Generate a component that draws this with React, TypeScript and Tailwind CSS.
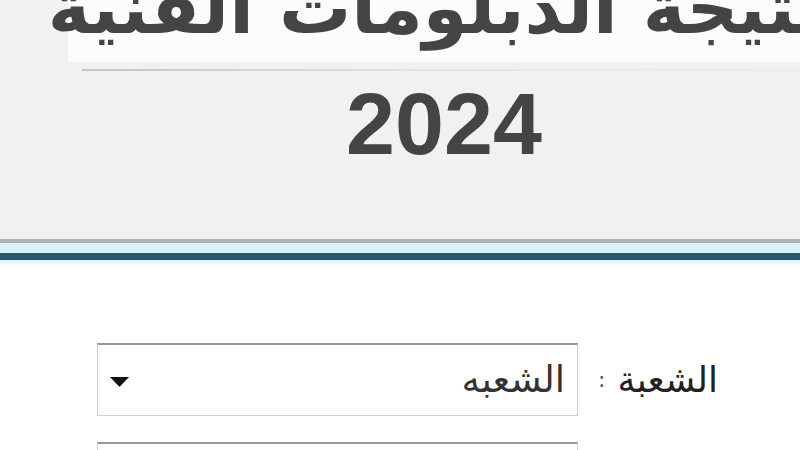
import { useState } from "react";

const SECTIONS = ["الشعبه", "صناعي", "تجاري", "زراعي", "فندقي"];

export default function App() {
  const [section, setSection] = useState(SECTIONS[0]);

  return (
    <div className="w-[800px] h-[450px] overflow-hidden bg-white" style={{ fontFamily: '"DejaVu Sans", sans-serif' }}>
      {/* banner */}
      <div className="h-[239px] bg-[#f1f1f1] flex flex-col">
        <div className="h-[62px] overflow-hidden flex justify-center pl-[72px] bg-[linear-gradient(to_right,#f1f1f1_68px,#fcfcfc_68px)]">
          <h1 dir="rtl" className="mt-[-28px] whitespace-nowrap text-[72px] leading-none font-bold text-[#444]">
            نتيجة الدبلومات الفنية
          </h1>
        </div>
        <div className="mt-[7px] ml-[82px] h-[2px] bg-gradient-to-r from-[#c4c4c4] via-[#e4e4e4] to-[#eeeeee]" />
        <div className="flex justify-center pl-[88px] mt-[9px]">
          <span
            className="text-[88px] leading-none font-bold text-[#444]"
            style={{ fontFamily: '"Liberation Sans", Arial, sans-serif' }}
          >
            2024
          </span>
        </div>
      </div>

      {/* separator stripes */}
      <div className="h-[4px] bg-[#a9b3b8]" />
      <div className="h-[10px] bg-[#d9f2f8]" />
      <div className="h-[7px] bg-[#235a70]" />
      <div className="h-[6px] bg-gradient-to-b from-[#d6f1f8] to-white" />

      {/* form */}
      <form dir="rtl" className="flex flex-col gap-[26px] pt-[77px] pr-[82px]">
        <div className="flex items-center">
          <label className="w-[140px] flex items-center gap-[12px] text-[36px] text-[#222]">
            <span>الشعبة</span>
            <span className="text-[22px] text-[#555]">:</span>
          </label>
          <div className="relative w-[481px] h-[73px] bg-white border border-[#cfcfcf] border-t-2 border-t-[#999]">
            <select
              value={section}
              onChange={(e) => setSection(e.target.value)}
              className="appearance-none w-full h-full bg-transparent pr-[12px] text-[37px] text-[#333] outline-none"
              style={{ fontFamily: '"DejaVu Sans", sans-serif' }}
            >
              {SECTIONS.map((s) => (
                <option key={s}>{s}</option>
              ))}
            </select>
            <svg className="absolute left-[12px] top-[32px] pointer-events-none" width="19" height="10" viewBox="0 0 19 10">
              <path d="M0 0H19L9.5 10Z" fill="#111" />
            </svg>
          </div>
        </div>
        <div className="flex items-center">
          <div className="w-[140px]" />
          <div className="w-[481px] h-[73px] bg-white border border-[#cfcfcf] border-t-2 border-t-[#999]" />
        </div>
      </form>
    </div>
  );
}
